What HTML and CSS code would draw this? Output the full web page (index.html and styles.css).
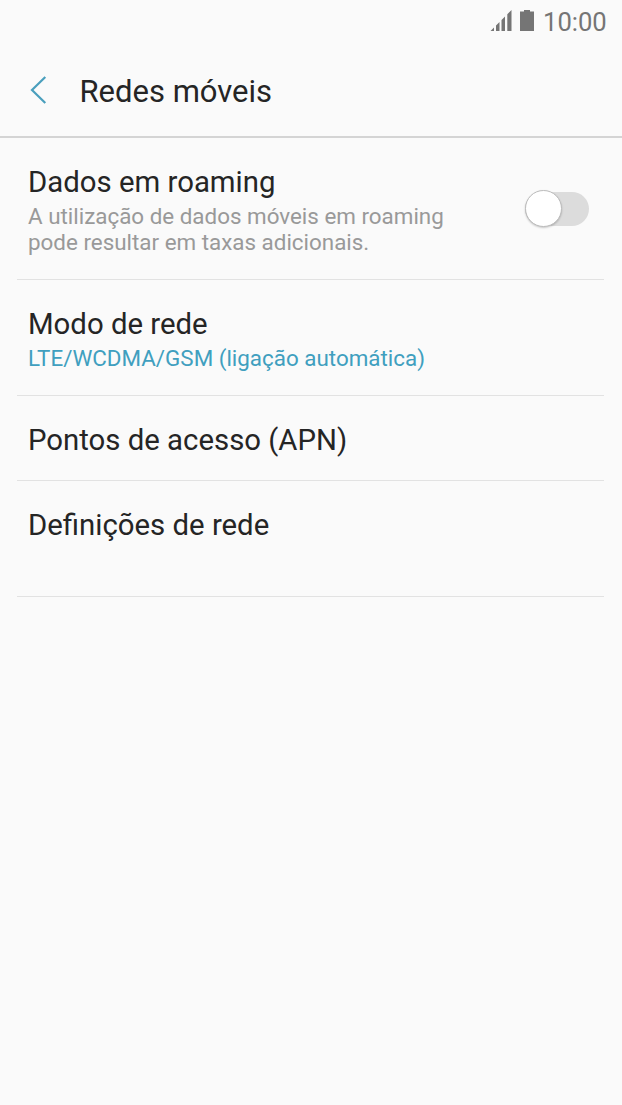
FILE: index.html
```html
<!DOCTYPE html>
<html lang="pt">
<head>
<meta charset="utf-8">
<title>Redes móveis</title>
<link rel="stylesheet" href="styles.css">
</head>
<body>
<div class="status">
  <svg class="signal" width="22" height="22" viewBox="0 0 22 22"><path d="M.5 21L4 17.500V21zM6 21v-5.500L9.500 12V21zM11.500 21V10L15 6.500V21zM17.300 21V4.200L21.500 0V21z"/></svg>
  <svg class="battery" width="14" height="21" viewBox="0 0 14 21"><path d="M4 0h6v1.500h4V21H0V1.500h4z"/></svg>
  <span class="time">10:00</span>
</div>
<header class="header">
  <svg class="back" width="18" height="28" viewBox="0 0 18 28"><path d="M15.300 1L2 14l13.300 13"/></svg>
  <h1 class="title">Redes móveis</h1>
</header>
<main class="list">
  <section class="row roaming">
    <div class="text">
      <h2 class="name">Dados em roaming</h2>
      <p class="desc">A utilização de dados móveis em roaming<br>pode resultar em taxas adicionais.</p>
    </div>
    <div class="toggle"><span class="knob"></span></div>
  </section>
  <section class="row mode">
    <div class="text">
      <h2 class="name">Modo de rede</h2>
      <p class="desc value">LTE/WCDMA/GSM (ligação automática)</p>
    </div>
  </section>
  <section class="row apn"><h2 class="name">Pontos de acesso (APN)</h2></section>
  <section class="row network"><h2 class="name">Definições de rede</h2></section>
</main>
</body>
</html>
```
FILE: styles.css
```css
* { box-sizing: border-box; }
body { margin: 0; height: 1105px; background: #fafafa; color: #252525; font-family: Roboto, sans-serif; }
h1, h2, p { margin: 0; font-weight: 400; }
.status { display: flex; height: 44px; padding: 0 16px 0 490px; color: #757575; }
.status svg { fill: #757575; flex: none; }
.signal { margin-top: 10px; }
.battery { margin: 10px 0 0 8px; }
.time { margin: 6px 0 0 9px; font-size: 25.6px; line-height: 32px; white-space: nowrap; }
.header { display: flex; height: 94px; padding: 32px 0 0 29.5px; border-bottom: 2px solid #d4d4d4; }
.back { flex: none; fill: none; stroke: #4a9fbd; stroke-width: 2.2; }
.title { margin-left: 32px; font-size: 31px; line-height: 32px; }
.list { padding: 0 18px 0 17px; }
.row { display: flex; justify-content: space-between; padding: 26px 15px 0 11px; border-bottom: 1px solid #e2e2e2; }
.name { font-size: 29.35px; line-height: 36px; white-space: nowrap; }
.desc { margin-top: 3px; font-size: 22.4px; line-height: 26.4px; color: #999; white-space: nowrap; }
.value { color: #409fbf; }
.roaming { height: 142px; }
.mode { height: 116px; }
.apn { height: 85px; }
.network { height: 116px; }
.toggle { position: relative; display: flex; align-items: center; width: 64px; height: 38px; margin-top: 26px; padding-bottom: 1px; }
.toggle::before { content: ""; position: absolute; inset: 2px 0; border-radius: 17px; background: #dcdcdc; }
.knob { position: relative; width: 37px; height: 37px; border: 1px solid #bcbcbc; border-radius: 50%; background: #fff; box-shadow: 0 1px 2px #0003; }
```
